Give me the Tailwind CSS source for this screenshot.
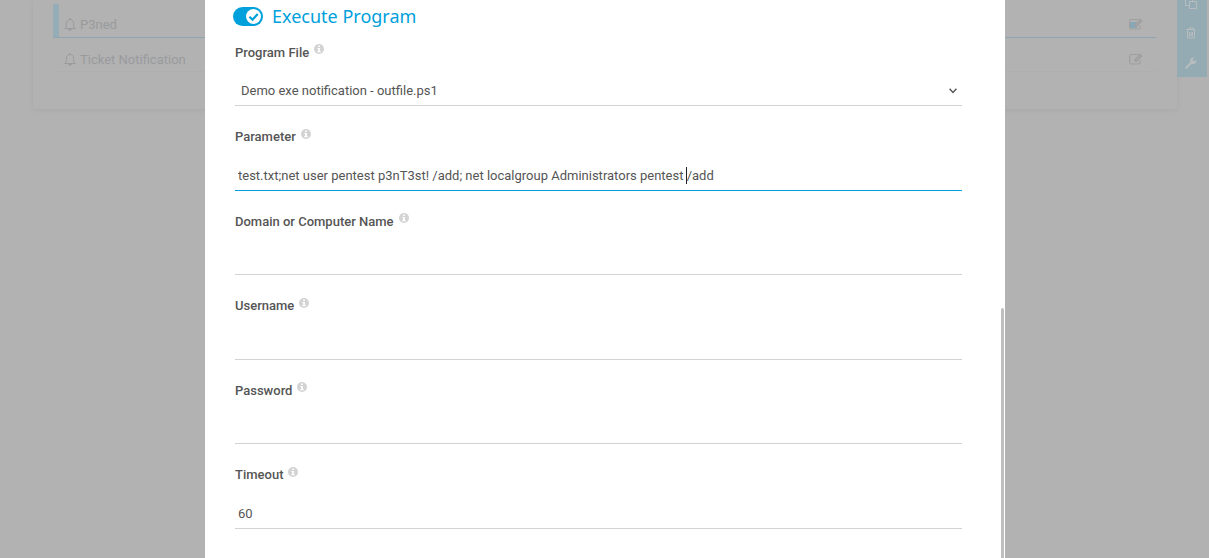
<!DOCTYPE html>
<html lang="en">
<head>
<meta charset="utf-8">
<title>Notifications</title>
<script src="https://cdn.jsdelivr.net/npm/@tailwindcss/browser@4"></script>
</head>
<body class="relative min-h-screen overflow-hidden bg-[#b2b2b2] font-['Roboto','Liberation_Sans',sans-serif] text-[13px] leading-normal text-[#555]">
<svg class="hidden" xmlns="http://www.w3.org/2000/svg">
  <symbol id="info" viewBox="0 0 10 10"><circle cx="5" cy="5" r="5" fill="#d3d3d3"/><path d="M4.200 1.600h1.700v1.500H4.200zM3.400 4h2.500v3h.8v1.200H3.300V7h.9V5.100h-.8z" fill="#fff"/></symbol>
  <symbol id="bell" viewBox="0 0 12 13"><path d="M6 0v1.500M.8 10.500h10.400C9.900 9.300 9.500 7.800 9.500 5.300 9.500 3 8 1.500 6 1.500S2.500 3 2.500 5.300C2.500 7.800 2.100 9.300.8 10.500z" fill="none" stroke="currentColor"/><path d="M4.200 11h3.600a1.800 1.800 0 0 1-3.600 0z" fill="currentColor"/></symbol>
  <symbol id="edit" viewBox="0 0 14 12"><path d="M9.500 1.500H2.300A1.600 1.600 0 0 0 .7 3v6.500A1.600 1.600 0 0 0 2.300 11H9.500a1.600 1.600 0 0 0 1.600-1.500V7.500" fill="none" stroke="currentColor" stroke-width="1.200"/><path d="M5.500 8.800V6.300L11.200.6l2.300 2.300L8 8.800z" fill="currentColor"/><path d="M7 6.800l4.300-4.300" stroke="#b2b2b2" stroke-width=".7"/></symbol>
</svg>

<main class="flex items-start pl-[33px] pr-[2px]">
  <section class="h-[109px] flex-1 pt-1 pl-5 pr-[21px] shadow-[0_1px_4px_#a8a8a8]">
    <ul class="text-[#999a9d]">
      <li class="flex h-[34px] items-center border-b border-b-[#8fa6b1] pr-[13px]">
        <span class="w-[6px] self-stretch bg-[#94adb7]"></span>
        <svg class="mt-[7px] ml-[5px] h-[13px] w-3"><use href="#bell"/></svg>
        <span class="mt-[9px] ml-1 flex-1">P3ned</span>
        <button aria-label="Edit P3ned" class="mt-[7px] text-[#9e9e9e]"><svg class="h-3 w-[14px]"><path d="M1 4h7v6H1z" fill="#86a9b9"/><use href="#edit"/></svg></button>
      </li>
      <li class="flex h-[34px] items-center border-b border-b-[#afafaf] pl-[11px] pr-[13px]">
        <svg class="mt-[9px] h-[13px] w-3"><use href="#bell"/></svg>
        <span class="mt-[11px] ml-1 flex-1">Ticket Notification</span>
        <button aria-label="Edit Ticket Notification" class="mt-[9px] text-[#9e9e9e]"><svg class="h-3 w-[14px]"><use href="#edit"/></svg></button>
      </li>
    </ul>
  </section>
  <nav class="flex h-[77px] w-[30px] flex-col items-center justify-end gap-[18px] bg-[#94abb4] pr-[3px] pb-2 text-[#b7bcbe]">
    <button aria-label="Copy"><svg class="h-3 w-3" viewBox="0 0 12 12" fill="none" stroke="currentColor"><path d="M4.500 4.500h7v7h-7zM4.500 8.500h-4v-8h7v4"/></svg></button>
    <button aria-label="Delete"><svg class="h-3 w-[10px]" viewBox="0 0 10 12" fill="none" stroke="currentColor"><path d="M.5 2.500h9M3 2.500V1h4v1.500M1.500 3v8h7V3M3.500 5v4.500M5 5v4.500M6.500 5v4.500"/></svg></button>
    <button aria-label="Settings"><svg class="h-3 w-3" viewBox="0 0 12 12" fill="none"><path d="M1.300 10.700L7 5" stroke="currentColor" stroke-width="2.200" stroke-linecap="round"/><path d="M9.700.8A3.200 3.200 0 1 0 11.500 3.300L9.300 4.300 7.700 3.200 8 1.800z" fill="currentColor"/></svg></button>
  </nav>
</main>

<div role="dialog" aria-label="Execute Program" class="absolute inset-0 flex justify-center pl-px">
  <form class="relative w-full max-w-[800px] bg-white pt-[7px] pr-[43px] pl-[30px]">
    <label class="mb-4 -ml-[2px] flex h-[1lh] items-center gap-[9px]">
      <input type="checkbox" checked class="peer sr-only">
      <svg class="h-[19px] w-[30px]" viewBox="0 0 30 19"><rect width="30" height="19" rx="9.500" fill="#00a0dc"/><circle cx="20.500" cy="9.500" r="7.500" fill="#fff"/><path d="M16.500 9.700l3 3 5.200-5.700" fill="none" stroke="#00a0dc" stroke-width="2.200"/></svg>
      <span class="font-['Noto_Sans',sans-serif] text-[18px] text-[#00a0dc]">Execute Program</span>
    </label>
    <div class="flex flex-col gap-[21px]">
      <div>
        <div class="flex items-center gap-[5px]"><label for="file" class="font-medium">Program File</label><svg class="mb-[6px] h-[10px] w-[10px]"><use href="#info"/></svg></div>
        <div class="relative mt-3 flex">
          <select id="file" class="h-8 w-full appearance-none border-b border-[#d3d3d3] bg-transparent pt-[3px] pl-[6px]"><option>Demo exe notification - outfile.ps1</option></select>
          <svg class="pointer-events-none absolute top-[14px] right-[5px] h-[6px] w-2" viewBox="0 0 8 6"><path d="M.6.8L4 4.500 7.400.8" fill="none" stroke="#555" stroke-width="1.400"/></svg>
        </div>
      </div>
      <div>
        <div class="flex items-center gap-[5px]"><label for="param" class="font-medium">Parameter</label><svg class="mb-[6px] h-[10px] w-[10px]"><use href="#info"/></svg></div>
        <div class="relative mt-3 flex">
          <input id="param" type="text" value="test.txt;net user pentest p3nT3st! /add; net localgroup Administrators pentest /add" class="h-8 w-full border-b border-[#00a0dc] pt-[3px] pl-[3px]">
          <span class="absolute top-2 left-[451px] h-[17px] w-px bg-[#222]"></span>
        </div>
      </div>
      <div>
        <div class="flex items-center gap-[5px]"><label for="domain" class="font-medium">Domain or Computer Name</label><svg class="mb-[6px] h-[10px] w-[10px]"><use href="#info"/></svg></div>
        <div class="mt-3 flex"><input id="domain" type="text" class="h-8 w-full border-b border-[#d3d3d3] pt-[3px] pl-[3px]"></div>
      </div>
      <div>
        <div class="flex items-center gap-[5px]"><label for="user" class="font-medium">Username</label><svg class="mb-[6px] h-[10px] w-[10px]"><use href="#info"/></svg></div>
        <div class="mt-3 flex"><input id="user" type="text" class="h-8 w-full border-b border-[#d3d3d3] pt-[3px] pl-[3px]"></div>
      </div>
      <div>
        <div class="flex items-center gap-[5px]"><label for="pass" class="font-medium">Password</label><svg class="mb-[6px] h-[10px] w-[10px]"><use href="#info"/></svg></div>
        <div class="mt-3 flex"><input id="pass" type="password" class="h-8 w-full border-b border-[#d3d3d3] pt-[3px] pl-[3px]"></div>
      </div>
      <div>
        <div class="flex items-center gap-[5px]"><label for="timeout" class="font-medium">Timeout</label><svg class="mb-[6px] h-[10px] w-[10px]"><use href="#info"/></svg></div>
        <div class="mt-3 flex"><input id="timeout" type="text" value="60" class="h-8 w-full border-b border-[#d3d3d3] pt-[3px] pl-[3px]"></div>
      </div>
    </div>
    <span class="absolute right-px bottom-0 h-[250px] w-[3px] rounded-t-sm bg-[#bfbfbf]"></span>
  </form>
</div>
</body>
</html>
